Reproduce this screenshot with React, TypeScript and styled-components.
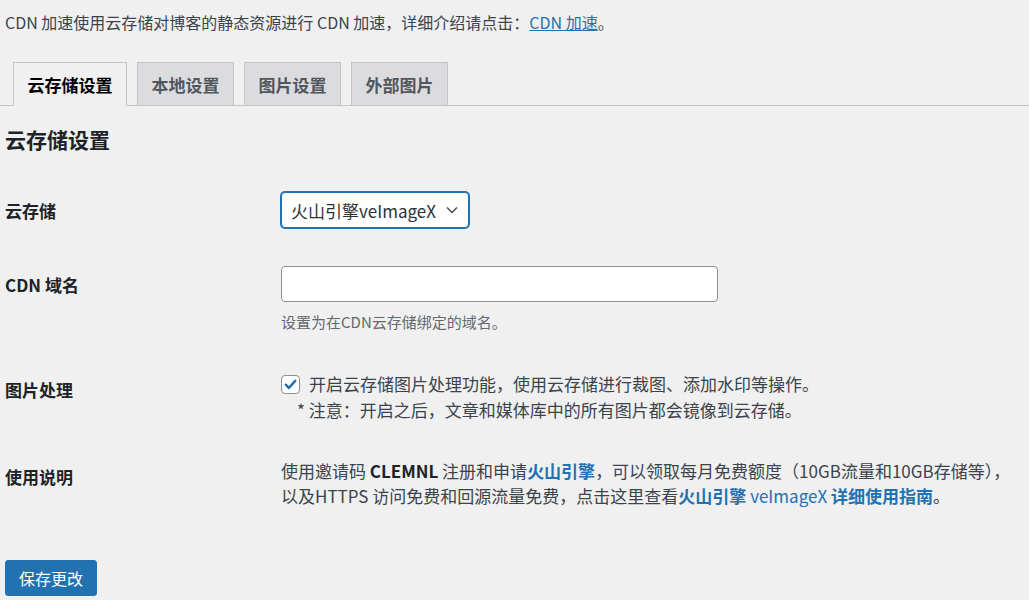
import * as React from "react";
import styled, { createGlobalStyle } from "styled-components";

const GlobalStyle = createGlobalStyle`
  html, body {
    margin: 0;
    padding: 0;
    background: #f0f0f1;
  }
  body {
    font-family: "Noto Sans CJK SC", "Noto Sans", sans-serif;
    color: #3c434a;
    font-size: 16px;
  }
`;

const tabs = ["云存储设置", "本地设置", "图片设置", "外部图片"];

function App() {
  const [active, setActive] = React.useState(0);
  const [storage, setStorage] = React.useState("volc");
  const [domain, setDomain] = React.useState("");
  const [imageProcess, setImageProcess] = React.useState(true);

  return (
    <Page>
      <GlobalStyle />
      <Intro>
        CDN 加速使用云存储对博客的静态资源进行 CDN 加速，详细介绍请点击：
        <IntroLink href="#">CDN 加速</IntroLink>。
      </Intro>

      <TabBar>
        {tabs.map((tab, i) => (
          <Tab key={tab} $active={i === active} onClick={() => setActive(i)}>
            {tab}
          </Tab>
        ))}
      </TabBar>

      <Heading>云存储设置</Heading>

      <Form onSubmit={(event) => event.preventDefault()}>
        <Row>
          <Label htmlFor="storage">云存储</Label>
          <Field>
            <SelectWrap>
              <Select
                id="storage"
                value={storage}
                onChange={(event) => setStorage(event.target.value)}
              >
                <option value="volc">火山引擎veImageX</option>
              </Select>
              <Chevron width="16" height="16" viewBox="0 0 16 16">
                <path
                  d="M3.5 6l4.5 4.5L12.5 6"
                  fill="none"
                  stroke="#50575e"
                  strokeWidth="1.7"
                  strokeLinecap="round"
                  strokeLinejoin="round"
                />
              </Chevron>
            </SelectWrap>
          </Field>
        </Row>

        <Row>
          <Label htmlFor="domain">CDN 域名</Label>
          <Field>
            <TextInput
              id="domain"
              type="text"
              value={domain}
              onChange={(event) => setDomain(event.target.value)}
            />
            <Description>设置为在CDN云存储绑定的域名。</Description>
          </Field>
        </Row>

        <Row>
          <Label as="div">图片处理</Label>
          <Field>
            <CheckLine>
              <CheckBox>
                <CheckInput
                  type="checkbox"
                  checked={imageProcess}
                  onChange={(event) => setImageProcess(event.target.checked)}
                />
                {imageProcess && (
                  <CheckMark width="19" height="19" viewBox="0 0 20 20">
                    <path
                      d="M5 10.2l3.3 3.4L15 6.2"
                      fill="none"
                      stroke="#2271b1"
                      strokeWidth="2.6"
                      strokeLinecap="round"
                      strokeLinejoin="round"
                    />
                  </CheckMark>
                )}
              </CheckBox>
              开启云存储图片处理功能，使用云存储进行裁图、添加水印等操作。
            </CheckLine>
            <Note>* 注意：开启之后，文章和媒体库中的所有图片都会镜像到云存储。</Note>
          </Field>
        </Row>

        <Row $top={16}>
          <Label as="div">使用说明</Label>
          <Field>
            <Usage>
              使用邀请码 <strong>CLEMNL</strong> 注册和申请
              <Strong href="#">火山引擎</Strong>
              ，可以领取每月免费额度（10GB流量和10GB存储等），
            </Usage>
            <Usage>
              以及HTTPS 访问免费和回源流量免费，点击这里查看
              <Strong href="#">
                火山引擎 <span>veImageX</span> 详细使用指南
              </Strong>
              。
            </Usage>
          </Field>
        </Row>

        <SubmitButton type="submit">保存更改</SubmitButton>
      </Form>
    </Page>
  );
}

const Page = styled.div`
  padding: 0 5px;
`;

const Intro = styled.p`
  margin: 10px 0 0;
  font-size: 16px;
  line-height: 24px;
  color: #3c434a;
`;

const IntroLink = styled.a`
  color: #2271b1;
  text-decoration: underline;
`;

const TabBar = styled.nav`
  display: flex;
  gap: 10px;
  margin: 28px -5px 0;
  padding-left: 13px;
  border-bottom: 1px solid #c3c4c7;
  height: 43px;
  align-items: flex-end;
`;

const Tab = styled.button<{ $active: boolean }>`
  box-sizing: border-box;
  height: 44px;
  margin-bottom: -1px;
  padding: 0 13.5px;
  font-family: inherit;
  font-size: 17px;
  font-weight: 700;
  color: ${(p) => (p.$active ? "#000" : "#50575e")};
  background: ${(p) => (p.$active ? "#f0f0f1" : "#dcdcde")};
  border: 1px solid #c3c4c7;
  border-bottom-color: ${(p) => (p.$active ? "#f0f0f1" : "#c3c4c7")};
  cursor: pointer;
`;

const Heading = styled.h2`
  margin: 20px 0 20px;
  font-size: 21px;
  line-height: 27px;
  font-weight: 700;
  color: #1d2327;
`;

const Form = styled.form`
  display: flex;
  flex-direction: column;
`;

const Row = styled.div<{ $top?: number }>`
  display: grid;
  grid-template-columns: 276px 1fr;
  padding: ${(p) => p.$top ?? 19}px 0 19px;
`;

const Label = styled.label`
  padding-top: 7px;
  font-size: 17px;
  line-height: 24px;
  font-weight: 700;
  color: #1d2327;
`;

const Field = styled.div`
  display: flex;
  flex-direction: column;
  align-items: flex-start;
  font-size: 17px;
  color: #3c434a;
`;

const SelectWrap = styled.div`
  position: relative;
`;

const Select = styled.select`
  appearance: none;
  box-sizing: border-box;
  width: 188px;
  height: 36px;
  padding: 0 30px 0 9px;
  font-family: inherit;
  font-size: 17px;
  color: #2c3338;
  background: #fff;
  border: 1px solid #2271b1;
  box-shadow: 0 0 0 1px #2271b1;
  border-radius: 4px;
  outline: none;
`;

const Chevron = styled.svg`
  position: absolute;
  right: 9px;
  top: 10px;
  pointer-events: none;
`;

const TextInput = styled.input`
  box-sizing: border-box;
  width: 437px;
  height: 36px;
  padding: 0 10px;
  font-family: inherit;
  font-size: 17px;
  background: #fff;
  border: 1px solid #8c8f94;
  border-radius: 4px;
  outline: none;
`;

const Description = styled.p`
  margin: 9px 0 0;
  font-size: 15px;
  line-height: 22px;
  color: #646970;
`;

const CheckLine = styled.label`
  display: flex;
  align-items: center;
  gap: 9px;
  line-height: 26px;
  white-space: nowrap;
`;

const CheckBox = styled.span`
  position: relative;
  display: inline-flex;
  width: 19px;
  height: 19px;
`;

const CheckInput = styled.input`
  appearance: none;
  box-sizing: border-box;
  margin: 0;
  width: 19px;
  height: 19px;
  background: #fff;
  border: 1px solid #8c8f94;
  border-radius: 4px;
  cursor: pointer;
`;

const CheckMark = styled.svg`
  position: absolute;
  left: 0;
  top: 0;
  pointer-events: none;
`;

const Note = styled.div`
  padding-left: 16px;
  line-height: 26px;
  white-space: nowrap;
`;

const Usage = styled.div`
  line-height: 25px;
  white-space: nowrap;

  strong {
    color: #1d2327;
  }
`;

const Strong = styled.a`
  color: #2271b1;
  font-weight: 700;
  text-decoration: none;

  span {
    font-weight: 400;
  }
`;

const SubmitButton = styled.button`
  align-self: flex-start;
  box-sizing: border-box;
  margin-top: 33px;
  height: 36px;
  padding: 0 13px;
  font-family: inherit;
  font-size: 16px;
  color: #fff;
  background: #2271b1;
  border: 1px solid #2271b1;
  border-radius: 3px;
  cursor: pointer;

  &:hover {
    background: #135e96;
  }
`;

export default App;
